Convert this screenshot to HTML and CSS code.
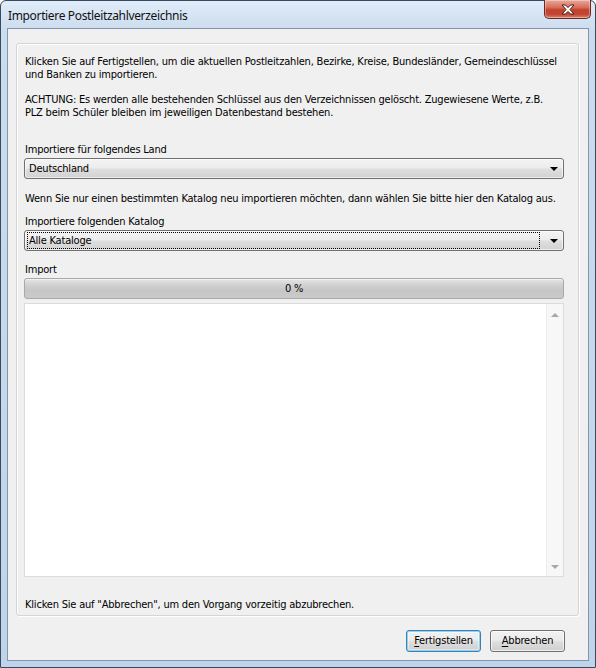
FILE: index.html
```html
<!DOCTYPE html>
<html>
<head>
<meta charset="utf-8">
<link rel="stylesheet" href="styles.css">
</head>
<body>
<div class="window">
  <div class="titlebar">
    <span class="title">Importiere Postleitzahlverzeichnis</span>
    <div class="close">
      <svg width="16" height="11" viewBox="0 0 16 11">
        <path d="M2 1 L5.5 1 L8 3.6 L10.5 1 L14 1 L10 5.5 L14 10 L10.5 10 L8 7.4 L5.5 10 L2 10 L6 5.5 Z" fill="#fff" stroke="#4a1d17" stroke-width="1" stroke-linejoin="round"/>
      </svg>
    </div>
  </div>
  <div class="client">
    <div class="panel">
      <p class="text t1">Klicken Sie auf Fertigstellen, um die aktuellen Postleitzahlen, Bezirke, Kreise, Bundesländer, Gemeindeschlüssel<br>und Banken zu importieren.</p>
      <p class="text t2">ACHTUNG: Es werden alle bestehenden Schlüssel aus den Verzeichnissen gelöscht. Zugewiesene Werte, z.B.<br>PLZ beim Schüler bleiben im jeweiligen Datenbestand bestehen.</p>
      <p class="text t3">Importiere für folgendes Land</p>
      <div class="combo"><span class="combo-val">Deutschland</span><span class="arrow"></span></div>
      <p class="text t4">Wenn Sie nur einen bestimmten Katalog neu importieren möchten, dann wählen Sie bitte hier den Katalog aus.</p>
      <p class="text t5">Importiere folgenden Katalog</p>
      <div class="combo"><span class="combo-val focus">Alle Kataloge</span><span class="arrow"></span></div>
      <p class="text t6">Import</p>
      <div class="progress">0 %</div>
      <div class="log">
        <div class="log-body"></div>
        <div class="scrollbar">
          <span class="sarrow up"></span>
          <span class="sarrow down"></span>
        </div>
      </div>
      <p class="text t7">Klicken Sie auf "Abbrechen", um den Vorgang vorzeitig abzubrechen.</p>
    </div>
    <div class="buttons">
      <div class="btn default"><u>F</u>ertigstellen</div>
      <div class="btn"><u>A</u>bbrechen</div>
    </div>
  </div>
</div>
</body>
</html>
```

FILE: styles.css
```css
html, body {
  margin: 0;
  padding: 0;
  background: #fff;
}
.window {
  position: relative;
  width: 596px;
  height: 668px;
  box-sizing: border-box;
  border: 1px solid #3a4a5c;
  border-radius: 6px 6px 0 0;
  background: linear-gradient(to bottom, #e0ecf9 0px, #cbdcee 30px, #bfd4ea 100%);
  display: flex;
  flex-direction: column;
  font-family: "DejaVu Sans Condensed", "DejaVu Sans", sans-serif;
  font-stretch: condensed;
  font-size: 11px;
  letter-spacing: -0.2px;
  color: #000;
}
.titlebar {
  height: 27px;
  flex: none;
  display: flex;
  align-items: center;
  padding-left: 7px;
}
.title {
  font-family: "Noto Sans", "Open Sans", sans-serif;
  font-stretch: normal;
  font-size: 12px;
  letter-spacing: -0.35px;
  color: #111;
  margin-top: 2px;
}
.close {
  position: absolute;
  top: -1px;
  right: 4px;
  width: 47px;
  height: 19px;
  box-sizing: border-box;
  border: 1px solid #6a2a20;
  border-top: none;
  border-radius: 0 0 5px 5px;
  background: linear-gradient(to bottom, #e9a99a 0%, #d8705d 40%, #c5412d 55%, #c24634 80%, #d9866f 100%);
  box-shadow: inset 0 0 0 1px rgba(255,255,255,0.35);
  display: flex;
  align-items: center;
  justify-content: center;
}
.client {
  flex: 1;
  margin: 0 6px 6px 6px;
  border: 1px solid #8396ab;
  background: #f0f0f0;
  display: flex;
  flex-direction: column;
}
.panel {
  margin: 14px 9px 0 8px;
  height: 573px;
  box-sizing: border-box;
  border: 1px solid #d5d5d5;
  border-radius: 3px;
  box-shadow: inset 1px 1px 0 #fff, 1px 1px 0 #fff;
  padding: 11px 14px 0 7px;
  display: flex;
  flex-direction: column;
}
.text {
  margin: 0;
  line-height: 13px;
  padding-left: 1px;
  white-space: nowrap;
}
.t2 { margin-top: 12px; }
.t3 { margin-top: 24px; }
.t4 { margin-top: 13px; }
.t5 { margin-top: 10px; }
.t6 { margin-top: 12px; }
.t7 { margin-top: 21px; }

.combo {
  margin-top: 2px;
  height: 21px;
  box-sizing: border-box;
  border: 1px solid #707070;
  border-radius: 3px;
  background: linear-gradient(to bottom, #f4f4f4 0%, #ececec 45%, #dedede 55%, #d2d2d2 100%);
  box-shadow: inset 0 0 0 1px rgba(255,255,255,0.6);
  display: flex;
  align-items: center;
  padding: 0 4px 0 2px;
}
.combo-val {
  flex: 1;
  line-height: 15px;
  padding-left: 1px;
  margin-right: 10px;
  border: 1px dotted transparent;
}
.combo-val.focus {
  border-color: #000;
}
.arrow {
  width: 0;
  height: 0;
  border-left: 4px solid transparent;
  border-right: 4px solid transparent;
  border-top: 4px solid #000;
  margin-right: 1px;
}
.progress {
  margin-top: 2px;
  height: 21px;
  box-sizing: border-box;
  border: 1px solid #a8a8a8;
  border-radius: 3px;
  background: linear-gradient(to bottom, #e6e6e6 0%, #d2d2d2 30%, #c6c6c6 60%, #cacaca 100%);
  box-shadow: inset 0 1px 0 #f2f2f2;
  text-align: center;
  line-height: 19px;
}
.log {
  margin-top: 4px;
  height: 274px;
  box-sizing: border-box;
  border: 1px solid #dcdcdc;
  background: #fff;
  display: flex;
}
.log-body { flex: 1; }
.scrollbar {
  width: 16px;
  border-left: 1px solid #ececec;
  background: #f7f7f7;
  display: flex;
  flex-direction: column;
  justify-content: space-between;
  align-items: center;
  padding: 9px 0 7px 0;
}
.sarrow {
  width: 0;
  height: 0;
  border-left: 4px solid transparent;
  border-right: 4px solid transparent;
}
.sarrow.up { border-bottom: 4px solid #a8a8a8; }
.sarrow.down { border-top: 4px solid #a8a8a8; }

.buttons {
  display: flex;
  justify-content: flex-end;
  gap: 9px;
  margin: 14px 23px 0 0;
}
.btn {
  width: 75px;
  height: 22px;
  box-sizing: border-box;
  border: 1px solid #707070;
  border-radius: 3px;
  background: linear-gradient(to bottom, #f2f2f2 0%, #ebebeb 45%, #dddddd 55%, #cfcfcf 100%);
  box-shadow: inset 0 0 0 1px rgba(255,255,255,0.7);
  text-align: center;
  line-height: 20px;
}
.btn u { text-decoration: underline; text-underline-offset: 2px; }
.btn.default {
  border-color: #3c7fb1;
  box-shadow: inset 0 0 0 1px #8ed4f4, inset 0 0 0 2px rgba(255,255,255,0.4);
}
```
